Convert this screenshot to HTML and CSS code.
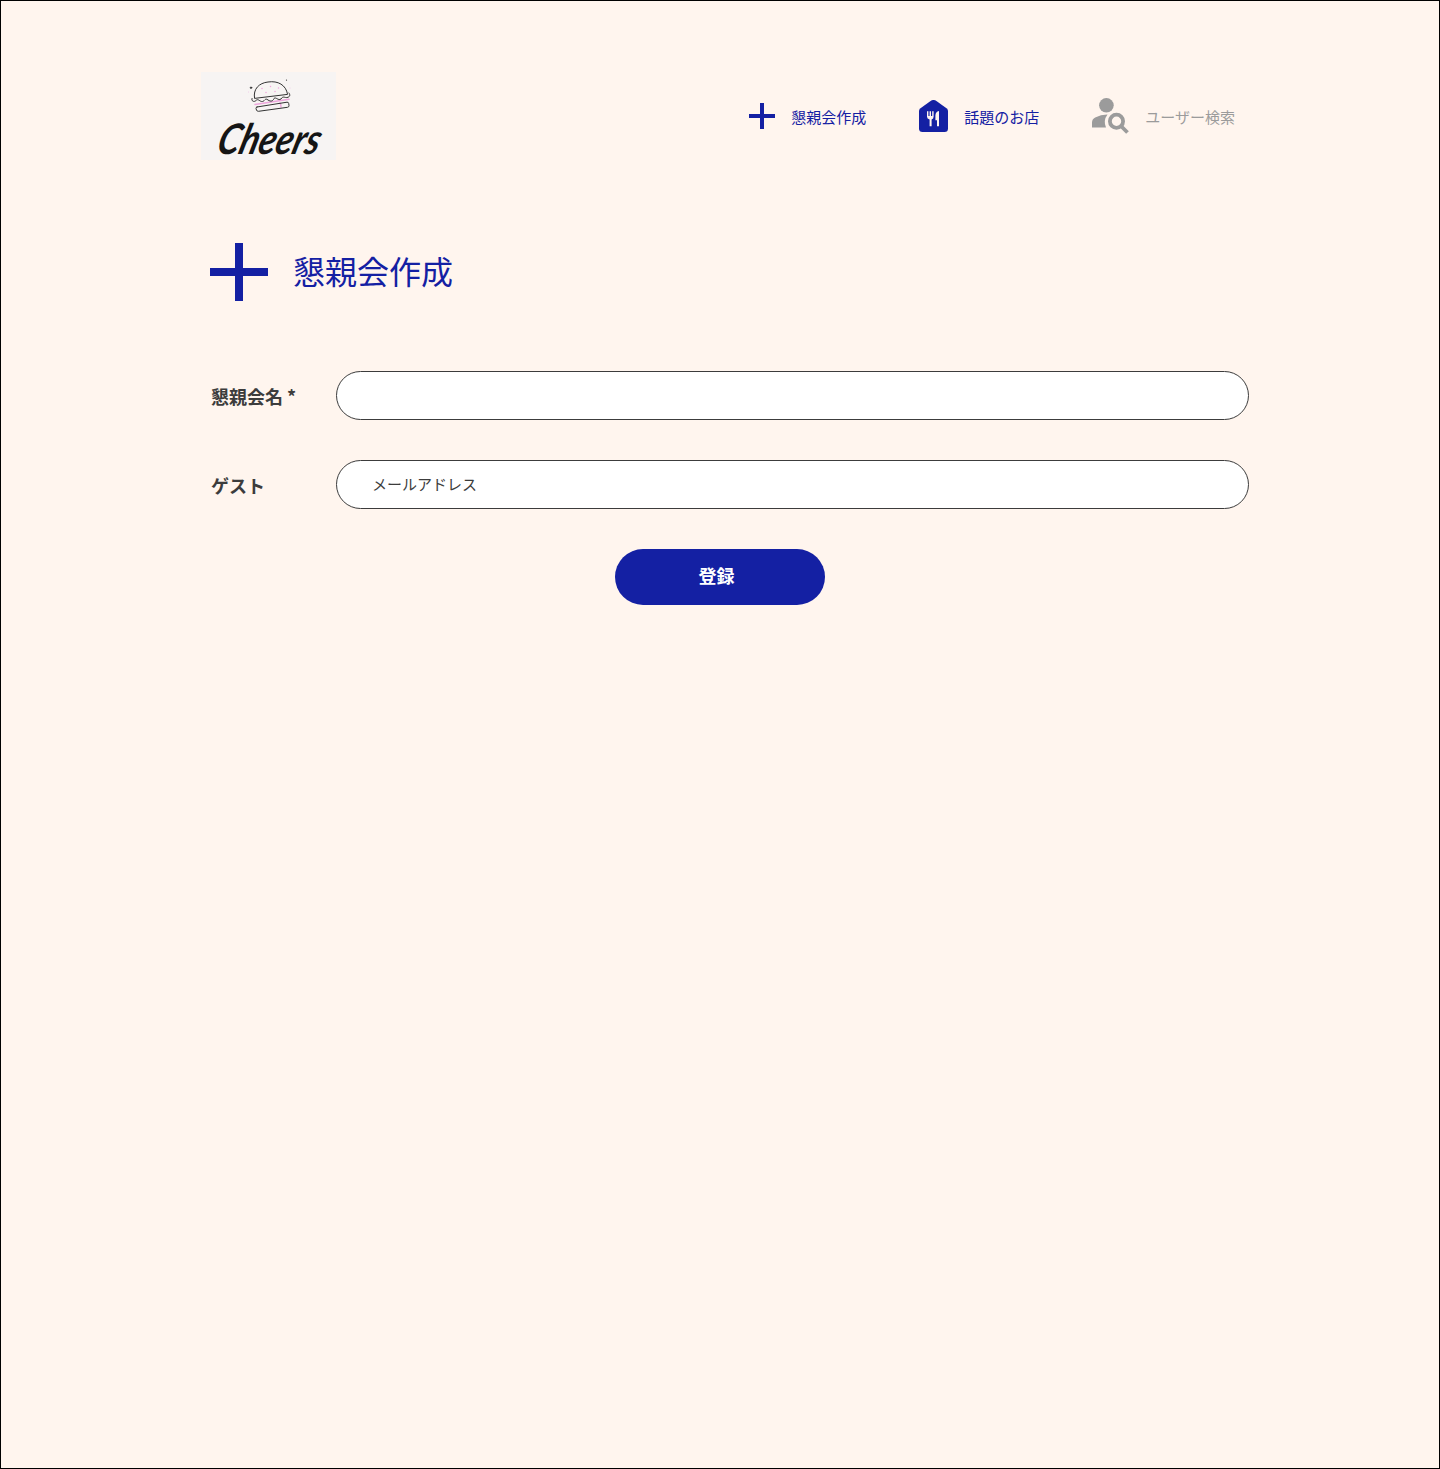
FILE: index.html
```html
<!DOCTYPE html>
<html lang="ja">
<head>
<meta charset="utf-8">
<title>懇親会作成 | Cheers</title>
<link rel="stylesheet" href="styles.css">
</head>
<body>
<div class="page">
  <header class="header">
    <a class="logo">
      <svg width="135" height="88" viewBox="0 0 135 88" role="img" aria-label="Cheers">
        <g transform="translate(-201 -72)" fill="none" stroke="#333" stroke-width="1" stroke-linecap="round" stroke-linejoin="round">
          <path d="M255 104.500L289 99.300M280 103Q281 104 281 107" stroke="#eda6dc" stroke-width="1.500"/>
          <path d="M254.500 98C253 89 259 83 268 82C278 80.500 286 85 287.500 94Z"/>
          <path d="M252 98.500C251 101 254 102.500 256 100.500C258 98 260 102 262.500 101.500C265 101 265 97.500 268 100C271 102 273 101 274 98.500C276 96.500 278 101 281 99C283 95.500 285 98 287 97.500C290 97 290.500 95 289 93"/>
          <path d="M257 107L287 102.200Q288.500 102 288.700 103.500L289 105.500Q289.200 107 287.500 107.300L258.500 111.300Q257 111.500 256.500 110L256 108.500Q255.800 107.300 257 107Z"/>
          <path d="M262 88.500v.1M270.500 86.500v.1M278.500 88v.1M266 92.500v.1M275 91.500v.1" stroke="#f0a8dd" stroke-width="1.500"/>
          <circle cx="251" cy="87.700" r=".8" fill="#222" stroke-width=".7"/>
          <path d="M286.500 80v.1" stroke-width="1.200"/>
          <path d="M248.500 92v.1M290 88v.1" stroke="#f0cbe8"/>
        </g>
        <text class="wordmark" transform="translate(14 82) skewX(-16)" textLength="102" lengthAdjust="spacingAndGlyphs">Cheers</text>
      </svg>
    </a>
    <nav class="nav">
      <a class="nav-item">
        <svg width="26" height="26" viewBox="0 0 26 26"><path d="M11 0h4v11h11v4H15v11h-4V15H0v-4h11z"/></svg>
        <span>懇親会作成</span>
      </a>
      <a class="nav-item">
        <svg width="29" height="32" viewBox="0 0 29 32">
          <path d="M12.300.6Q14.500-.7 16.700.6L27.500 8.200Q29 9.300 29 11.100V28.500Q29 32 25.500 32H3.500Q0 32 0 28.500V11.100Q0 9.300 1.500 8.200Z"/>
          <path class="cutlery" d="M8 11.200h1.400v4.800h1.200v-4.800h1.400v4.800h1.200v-4.800h1.400v5.500q0 2-2 2.700v6.800h-2v-6.800Q8 18.700 8 16.700ZM20 11v15.200h-2v-6h-1.600v-4.600q.1-3.900 3.600-4.600Z"/>
        </svg>
        <span>話題のお店</span>
      </a>
      <a class="nav-item nav-item-muted">
        <svg width="37" height="36" viewBox="0 0 37 36">
          <circle cx="14.400" cy="7.300" r="7.300"/>
          <path d="M0 29.500V24.500Q0 21 3.200 19.500Q9 16.500 15.500 16.600Q11 22.500 14 29.500Z"/>
          <path class="lens" d="M28 27L35.500 34.500"/>
          <circle class="lens" cx="24.500" cy="23.200" r="6.600"/>
        </svg>
        <span>ユーザー検索</span>
      </a>
    </nav>
  </header>

  <main>
    <h1 class="title">
      <svg width="58" height="58" viewBox="0 0 58 58"><path d="M25 0h8v25h25v8H33v25h-8V33H0v-8h25z"/></svg>
      <span>懇親会作成</span>
    </h1>
    <form class="form">
      <div class="row">
        <label for="party-name">懇親会名 *</label>
        <input id="party-name" type="text">
      </div>
      <div class="row">
        <label for="guest">ゲスト</label>
        <input id="guest" type="text" placeholder="メールアドレス">
      </div>
      <button class="submit" type="button">登録</button>
    </form>
  </main>
</div>
</body>
</html>
```
FILE: styles.css
```css
* {
  box-sizing: border-box;
}

body {
  margin: 0;
  font-family: "Noto Sans CJK JP", sans-serif;
  color: #3c3c3c;
}

.page {
  min-height: 1469px;
  padding: 71px 190px 0 200px;
  border: 1px solid #000;
  background: #fff5ee;
}

svg {
  display: block;
  flex: none;
}

.header {
  display: flex;
  align-items: center;
  justify-content: space-between;
  height: 88px;
  padding-right: 14px;
}

.logo {
  background: #f7f4f3;
}

.logo svg {
  overflow: visible;
}

.wordmark {
  font-family: Lato, sans-serif;
  font-size: 42px;
  font-style: italic;
  font-weight: 700;
  fill: #151515;
}

.nav {
  display: flex;
  gap: 53px;
}

.nav-item {
  display: flex;
  align-items: center;
  gap: 16px;
  height: 36px;
  font-size: 15px;
  line-height: 22px;
  color: #1420a3;
  fill: currentColor;
}

.nav-item span {
  padding-top: 2px;
}

.nav-item-muted {
  color: #9b9b9b;
}

.cutlery {
  fill: #fff5ee;
}

.lens {
  fill: none;
  stroke: currentColor;
  stroke-width: 3.800;
}

.title {
  display: flex;
  align-items: center;
  gap: 25px;
  margin: 83px 0 70px 9px;
  font-size: 32px;
  font-weight: 400;
  line-height: 46px;
  color: #1420a3;
  fill: currentColor;
}

.title span {
  padding-bottom: 5px;
}

.form {
  display: grid;
  gap: 40px;
}

.row {
  display: grid;
  grid-template-columns: 125px 1fr;
  align-items: center;
  padding-left: 10px;
}

.row label {
  font-size: 18px;
  font-weight: 700;
  line-height: 26px;
}

.row input {
  width: 100%;
  height: 49px;
  padding: 0 35px 2px;
  border: 1px solid #3c3c3c;
  border-radius: 25px;
  background: #fff;
  font: 15px "Noto Sans CJK JP", sans-serif;
  color: inherit;
}

.row input::placeholder {
  color: #3c3c3c;
  opacity: 1;
}

.submit {
  justify-self: center;
  width: 210px;
  height: 56px;
  margin-right: 10px;
  padding: 0 7px 4px 0;
  border: 0;
  border-radius: 28px;
  background: #1420a3;
  font: 700 18px "Noto Sans CJK JP", sans-serif;
  color: #fff;
}
```
